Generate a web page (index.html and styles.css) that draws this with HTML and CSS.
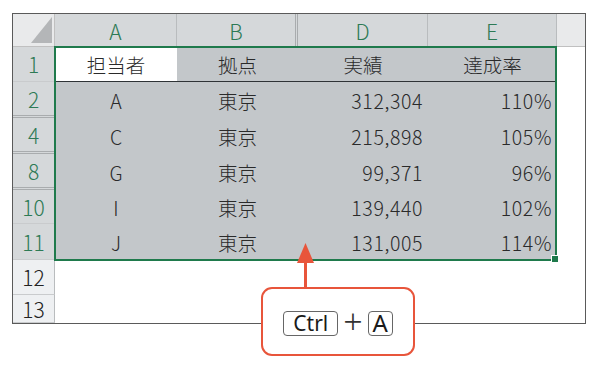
FILE: index.html
```html
<!DOCTYPE html>
<html lang="ja">
<head>
<meta charset="utf-8">
<link rel="stylesheet" href="styles.css">
</head>
<body>
<div class="page">
  <div class="sheet">
    <div class="corner"><span class="tri"></span></div>
    <div class="ch sel">A</div>
    <div class="ch sel hidden-next">B</div>
    <div class="ch sel">D</div>
    <div class="ch sel">E</div>
    <div class="ch last"></div>

    <div class="rh sel">1</div>
    <div class="c cen active top">担当者</div>
    <div class="c cen top">拠点</div>
    <div class="c cen top">実績</div>
    <div class="c cen top">達成率</div>
    <div class="c blank"></div>

    <div class="rh sel hidden-below">2</div>
    <div class="c cen">A</div>
    <div class="c cen">東京</div>
    <div class="c num">312,304</div>
    <div class="c num">110%</div>
    <div class="c blank"></div>

    <div class="rh sel hidden-below">4</div>
    <div class="c cen">C</div>
    <div class="c cen">東京</div>
    <div class="c num">215,898</div>
    <div class="c num">105%</div>
    <div class="c blank"></div>

    <div class="rh sel hidden-below">8</div>
    <div class="c cen">G</div>
    <div class="c cen">東京</div>
    <div class="c num">99,371</div>
    <div class="c num">96%</div>
    <div class="c blank"></div>

    <div class="rh sel">10</div>
    <div class="c cen">I</div>
    <div class="c cen">東京</div>
    <div class="c num">139,440</div>
    <div class="c num">102%</div>
    <div class="c blank"></div>

    <div class="rh sel">11</div>
    <div class="c cen">J</div>
    <div class="c cen">東京</div>
    <div class="c num">131,005</div>
    <div class="c num">114%</div>
    <div class="c blank"></div>

    <div class="rh">12</div>
    <div class="c blank span5"></div>

    <div class="rh">13</div>
    <div class="c blank span5"></div>

    <div class="selection"><span class="handle"></span></div>
  </div>

  <svg class="arrow" width="20" height="46" viewBox="0 0 20 46">
    <polygon points="9.5,0 18,20 1,20" fill="#e8553b"/>
    <rect x="8" y="19" width="3" height="27" fill="#e8553b"/>
  </svg>

  <div class="callout">
    <span class="key key-ctrl">Ctrl</span>
    <span class="plus">+</span>
    <span class="key key-a">A</span>
  </div>
</div>
</body>
</html>
```

FILE: styles.css
```css
html, body {
  margin: 0;
  padding: 0;
  background: #fff;
}
body {
  font-family: "Noto Sans CJK JP", "Noto Sans", sans-serif;
  color: #333;
}
.page {
  position: relative;
  width: 600px;
  height: 368px;
  padding: 13px 0 0 12px;
  box-sizing: border-box;
}
.sheet {
  position: relative;
  width: 574px;
  height: 311px;
  box-sizing: border-box;
  border: 1px solid #5a5a5a;
  display: grid;
  grid-template-columns: 42px 122px 121px 130px 129px 28px;
  grid-template-rows: 33px 35px 36px 36px 36px 34px 36px 35px 28px;
}
.corner {
  position: relative;
  background: #e9eaeb;
  border-right: 1px solid #c0c0c0;
  border-bottom: 1px solid #c0c0c0;
}
.tri {
  position: absolute;
  right: 2px;
  bottom: 3px;
  width: 0;
  height: 0;
  border-left: 21px solid transparent;
  border-bottom: 26px solid #b4b6b8;
}
.ch {
  display: flex;
  align-items: center;
  justify-content: center;
  font-size: 21px;
  font-weight: 300;
  color: #2d7a55;
  background: #d5d8da;
  border-right: 1px solid #b9bcbe;
  box-sizing: border-box;
}
.ch.hidden-next {
  border-right: 3px double #a9acae;
}
.ch.last {
  background: #e9eaeb;
  border-right: none;
  border-bottom: 1px solid #c0c0c0;
}
.rh {
  display: flex;
  align-items: center;
  justify-content: center;
  font-size: 21px;
  font-weight: 300;
  background: #eef0f2;
  color: #222;
  border-bottom: 1px solid #c9cbcd;
  border-right: 1px solid #b9bcbe;
  box-sizing: border-box;
}
.rh.sel {
  background: #d5d8da;
  color: #2d7a55;
}
.rh.hidden-below {
  border-bottom: 3px double #a9acae;
}
.c {
  display: flex;
  align-items: center;
  font-size: 19.5px;
  font-weight: 300;
  background: #c3c7ca;
  color: #2a2a2a;
  box-sizing: border-box;
}
.c.cen {
  justify-content: center;
}
.c.num {
  justify-content: flex-end;
  padding-right: 5px;
  letter-spacing: 0.6px;
}
.c.top {
  border-bottom: 1.5px solid #2f3336;
}
.c.active {
  background: #fff;
}
.c.blank {
  background: #fff;
}
.c.span5 {
  grid-column: span 5;
}
.selection {
  position: absolute;
  left: 41px;
  top: 32px;
  width: 503px;
  height: 215px;
  box-sizing: border-box;
  border: 2px solid #1f7a4c;
  pointer-events: none;
}
.handle {
  position: absolute;
  right: -4px;
  bottom: -4px;
  width: 6px;
  height: 6px;
  background: #1f7a4c;
  border: 1px solid #fff;
}
.arrow {
  position: absolute;
  left: 296px;
  top: 243px;
}
.callout {
  position: absolute;
  left: 261px;
  top: 287px;
  width: 154px;
  height: 69px;
  box-sizing: border-box;
  border: 2px solid #e8553b;
  border-radius: 11px;
  background: #fff;
  display: flex;
  align-items: center;
  justify-content: center;
  gap: 5px;
  padding-top: 3px;
}
.key {
  display: flex;
  align-items: center;
  justify-content: center;
  height: 25px;
  box-sizing: border-box;
  border: 1.5px solid #666;
  border-radius: 4px;
  color: #1a1a1a;
  font-family: "Noto Sans", "Open Sans", sans-serif;
  font-weight: 400;
  line-height: 1;
}
.key-ctrl {
  width: 55px;
  font-size: 21px;
}
.key-a {
  width: 25px;
  font-size: 24px;
}
.plus {
  font-family: "Noto Sans", sans-serif;
  font-size: 34px;
  font-weight: 300;
  color: #333;
  line-height: 1;
  margin-top: -5px;
}
```
